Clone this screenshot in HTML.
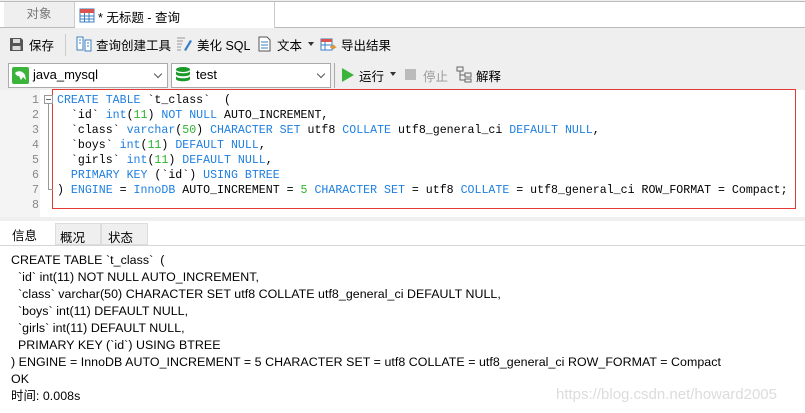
<!DOCTYPE html>
<html><head><meta charset="utf-8"><style>
*{margin:0;padding:0;box-sizing:border-box}
body{width:805px;height:413px;overflow:hidden;background:#efefef;font-family:"Liberation Sans","Noto Sans CJK SC",sans-serif;font-size:12px;color:#000;position:relative}
.a{position:absolute}
.mono{font-family:"Liberation Mono","Noto Sans CJK SC",monospace;font-size:11.6px;white-space:pre;line-height:15px}
.k{color:#1e7fe0}.n{color:#2db52d}
.info{font-size:12.4px;line-height:17px;white-space:pre;letter-spacing:0.05px}
.cb{background:#fff;border:1px solid #aaa;height:25px}
</style></head><body>
<div class="a" style="left:0;top:1px;width:805px;height:27px;background:#fff;border-top:1px solid #bbb;border-bottom:1px solid #bbb"></div>
<div class="a" style="left:4px;top:2px;width:70px;height:25px;background:#efefef;color:#777;text-align:center;line-height:25px;font-size:12.5px">对象</div>
<div class="a" style="left:74px;top:2px;width:1px;height:25px;background:#ccc"></div>
<div class="a" style="left:75px;top:2px;width:200px;height:26px;background:#fff;border-right:1px solid #ccc"></div>
<svg class="a" style="left:79px;top:7px" width="16" height="16"><rect x="1" y="2" width="14" height="13" fill="#fff" stroke="#3a7fc6"/><rect x="1" y="2" width="14" height="4" fill="#d9534f"/><path d="M1 9h14M1 12h14M5.5 6v9M10 6v9" stroke="#3a7fc6"/></svg>
<div class="a" style="left:98px;top:7px;font-size:12.5px">* 无标题 - 查询</div>
<svg class="a" style="left:9px;top:37px" width="15" height="15"><path d="M1 1h11l2 2v11H1z" fill="#555"/><rect x="4" y="2" width="7" height="4" fill="#ddd"/><rect x="3.5" y="9" width="8" height="4" fill="#ddd"/></svg>
<div class="a" style="left:29px;top:35px;font-size:12.5px">保存</div>
<div class="a" style="left:65px;top:34px;width:1px;height:22px;background:#ccc"></div>
<svg class="a" style="left:76px;top:36px" width="16" height="16"><rect x="1" y="1" width="6" height="13" fill="#fff" stroke="#3a7fc6"/><rect x="9" y="4" width="6" height="11" fill="#fff" stroke="#3a7fc6"/><path d="M3 4h2M3 7h2M11 7h2M11 10h2" stroke="#3a7fc6"/></svg>
<div class="a" style="left:96px;top:35px;font-size:12.5px">查询创建工具</div>
<svg class="a" style="left:176px;top:36px" width="17" height="16"><path d="M1 2h8M1 5h6M1 8h5M1 11h4M1 14h4" stroke="#999"/><path d="M8 14l6-10 2 1-6 10z" fill="#3a7fc6"/></svg>
<div class="a" style="left:197px;top:35px;font-size:12.5px">美化 SQL</div>
<svg class="a" style="left:258px;top:36px" width="13" height="16"><path d="M1 1h8l3 3v11H1z" fill="#fff" stroke="#555"/><path d="M3 6h7M3 9h7M3 12h7" stroke="#3a7fc6"/></svg>
<div class="a" style="left:277px;top:35px;font-size:12.5px">文本</div>
<div class="a" style="left:308px;top:42px;border:3px solid transparent;border-top:4px solid #333"></div>
<svg class="a" style="left:320px;top:36px" width="17" height="16"><rect x="1" y="3" width="11" height="11" fill="#fff" stroke="#3a7fc6"/><rect x="1" y="3" width="11" height="3" fill="#d9534f"/><path d="M1 9h11M5 6v8" stroke="#3a7fc6"/><path d="M10 11h5l-2-2M15 11l-2 2" stroke="#e8902a" stroke-width="1.5" fill="none"/></svg>
<div class="a" style="left:341px;top:35px;font-size:12.5px">导出结果</div>
<div class="a cb" style="left:8px;top:63px;width:160px"></div>
<svg class="a" style="left:12px;top:67px" width="17" height="17"><rect width="17" height="17" rx="2" fill="#3cb43c"/><path d="M3 6c3-3 8-2 10 2l1 5-3-3-2 3-2-4c-2 0-3-1-4-3z" fill="#fff"/></svg>
<div class="a" style="left:33px;top:67px;font-size:13px">java_mysql</div>
<div class="a" style="left:155px;top:71px;width:6px;height:6px;border-right:1px solid #555;border-bottom:1px solid #555;transform:rotate(45deg)"></div>
<div class="a cb" style="left:171px;top:63px;width:160px"></div>
<svg class="a" style="left:175px;top:66px" width="16" height="18"><ellipse cx="8" cy="3.5" rx="7" ry="2.5" fill="#1a9a2a"/><path d="M1 5v3c0 3 14 3 14 0V5c0 3-14 3-14 0zM1 10v3c0 3 14 3 14 0v-3c0 3-14 3-14 0z" fill="#1a9a2a"/></svg>
<div class="a" style="left:196px;top:67px;font-size:13px">test</div>
<div class="a" style="left:318px;top:71px;width:6px;height:6px;border-right:1px solid #555;border-bottom:1px solid #555;transform:rotate(45deg)"></div>
<div class="a" style="left:334px;top:63px;width:1px;height:25px;background:#aaa"></div>
<svg class="a" style="left:341px;top:67px" width="13" height="15"><path d="M1 1l12 7-12 7z" fill="#3cb43c"/></svg>
<div class="a" style="left:359px;top:66px;font-size:12.5px">运行</div>
<div class="a" style="left:390px;top:72px;border:3px solid transparent;border-top:4px solid #333"></div>
<div class="a" style="left:405px;top:69px;width:11px;height:11px;background:#bbb"></div>
<div class="a" style="left:423px;top:66px;font-size:12.5px;color:#999">停止</div>
<svg class="a" style="left:456px;top:66px" width="17" height="17"><path d="M1 1h6v4H1zM9 7h6v4H9zM9 13h6v3H9zM4 5v9h5M4 9h5" fill="none" stroke="#666"/></svg>
<div class="a" style="left:476px;top:66px;font-size:12.5px">解释</div>
<div class="a" style="left:0;top:90px;width:805px;height:127px;background:#fff"></div>
<div class="a" style="left:0;top:90px;width:40px;height:127px;background:#f4f4f4"></div>
<div class="a" style="left:52px;top:89px;width:744px;height:120px;border:1px solid #e53935"></div>
<div class="a mono" style="left:32px;top:93px;color:#888;text-align:right">1
2
3
4
5
6
7
8</div>
<div class="a" style="left:44px;top:95px;width:9px;height:9px;border:1px solid #999;background:#fff"></div>
<div class="a" style="left:46px;top:99px;width:5px;height:1px;background:#666"></div>
<div class="a" style="left:48px;top:104px;width:1px;height:85px;background:#999"></div>
<div class="a" style="left:48px;top:189px;width:5px;height:1px;background:#999"></div>
<div class="a mono" style="left:57px;top:93px"><span class="k">CREATE TABLE</span> `t_class`  (
  `id` <span class="k">int</span>(<span class="n">11</span>) <span class="k">NOT NULL</span> AUTO_INCREMENT,
  `class` <span class="k">varchar</span>(<span class="n">50</span>) <span class="k">CHARACTER SET</span> utf8 <span class="k">COLLATE</span> utf8_general_ci <span class="k">DEFAULT NULL</span>,
  `boys` <span class="k">int</span>(<span class="n">11</span>) <span class="k">DEFAULT NULL</span>,
  `girls` <span class="k">int</span>(<span class="n">11</span>) <span class="k">DEFAULT NULL</span>,
  <span class="k">PRIMARY KEY</span> (`id`) <span class="k">USING BTREE</span>
) <span class="k">ENGINE</span> = <span class="k">InnoDB</span> AUTO_INCREMENT = <span class="n">5</span> <span class="k">CHARACTER SET</span> = utf8 <span class="k">COLLATE</span> = utf8_general_ci ROW_FORMAT = Compact;</div>
<div class="a" style="left:0;top:221px;width:805px;height:192px;background:#fff"></div>
<div class="a" style="left:0;top:245px;width:805px;height:1px;background:#d6d6d6"></div>
<div class="a" style="left:55px;top:223px;width:46px;height:22px;background:#efefef;border:1px solid #ddd"></div>
<div class="a" style="left:101px;top:223px;width:47px;height:22px;background:#efefef;border:1px solid #ddd"></div>
<div class="a" style="left:12px;top:225px;font-size:12.5px">信息</div>
<div class="a" style="left:60px;top:227px;font-size:12.5px">概况</div>
<div class="a" style="left:108px;top:227px;font-size:12.5px">状态</div>
<div class="a info" style="left:11px;top:252px">CREATE TABLE `t_class`  (
  `id` int(11) NOT NULL AUTO_INCREMENT,
  `class` varchar(50) CHARACTER SET utf8 COLLATE utf8_general_ci DEFAULT NULL,
  `boys` int(11) DEFAULT NULL,
  `girls` int(11) DEFAULT NULL,
  PRIMARY KEY (`id`) USING BTREE
) ENGINE = InnoDB AUTO_INCREMENT = 5 CHARACTER SET = utf8 COLLATE = utf8_general_ci ROW_FORMAT = Compact
OK
时间: 0.008s</div>
<div class="a" style="left:556px;top:386px;font-size:15px;color:#dcdcdc">https://blog.csdn.net/howard2005</div>
</body></html>
